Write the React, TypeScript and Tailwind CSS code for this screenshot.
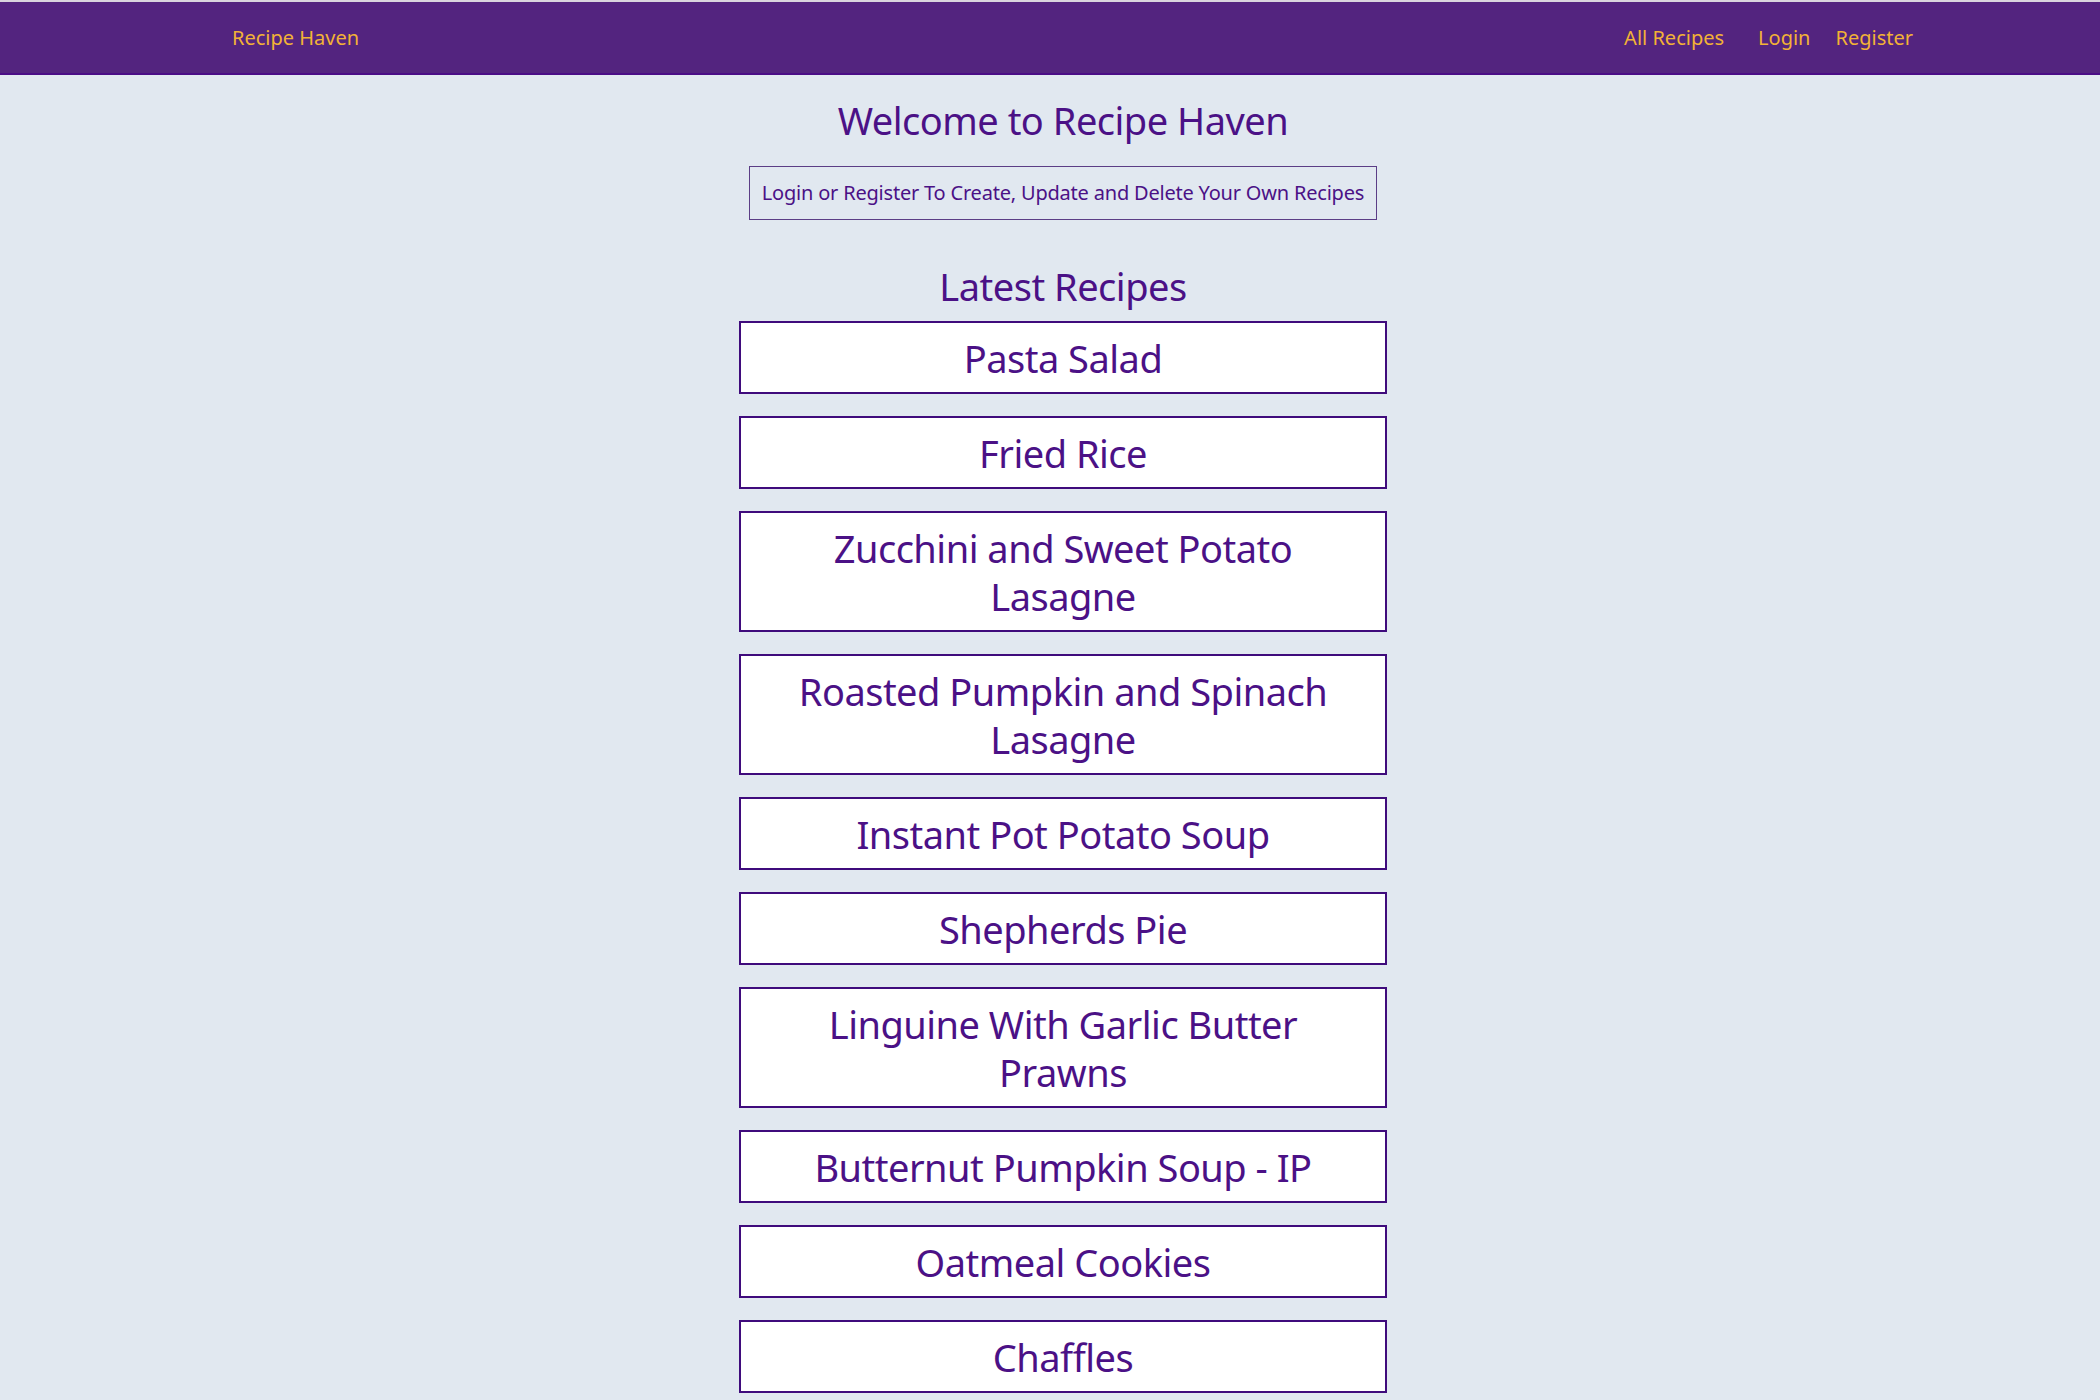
import React from "react";

const recipes = [
  "Pasta Salad",
  "Fried Rice",
  "Zucchini and Sweet Potato Lasagne",
  "Roasted Pumpkin and Spinach Lasagne",
  "Instant Pot Potato Soup",
  "Shepherds Pie",
  "Linguine With Garlic Butter Prawns",
  "Butternut Pumpkin Soup - IP",
  "Oatmeal Cookies",
  "Chaffles",
];

export default function App() {
  return (
    <div
      className="min-h-screen bg-[#e1e8f0] text-[#4b1186]"
      style={{ fontFamily: '"Noto Sans", "Open Sans", sans-serif' }}
    >
      <div className="h-[2px] bg-[#d9d4de]" />
      <nav className="h-[73px] bg-[#53247f] border-b-[2px] border-[#4a0d86] flex items-center justify-between pl-[232px] pr-[187px]">
        <a className="text-[20px] text-[#f2b236]">Recipe Haven</a>
        <div className="flex items-center text-[20px] text-[#f2b236]">
          <a className="mr-[34px]">All Recipes</a>
          <a className="mr-[25px]">Login</a>
          <a>Register</a>
        </div>
      </nav>
      <main className="flex flex-col items-center pl-[26px]">
        <h1 className="mt-[21px] text-[38px] leading-[48px] tracking-[-0.5px]">Welcome to Recipe Haven</h1>
        <div className="mt-[22px] w-[628px] h-[54px] border border-[#5b3d86] flex items-center justify-center text-[20px] tracking-[-0.2px] whitespace-nowrap">
          Login or Register To Create, Update and Delete Your Own Recipes
        </div>
        <h2 className="mt-[42px] text-[38px] leading-[48px] tracking-[-0.5px]">Latest Recipes</h2>
        <ul className="mt-[11px] w-[648px] flex flex-col gap-[22px] pb-10">
          {recipes.map((r) => (
            <li
              key={r}
              className="bg-white border-2 border-[#3f0b7c] pt-[11px] pb-[10px] px-[32px] text-center text-[38px] leading-[48px] tracking-[-0.5px]"
            >
              {r}
            </li>
          ))}
        </ul>
      </main>
    </div>
  );
}
